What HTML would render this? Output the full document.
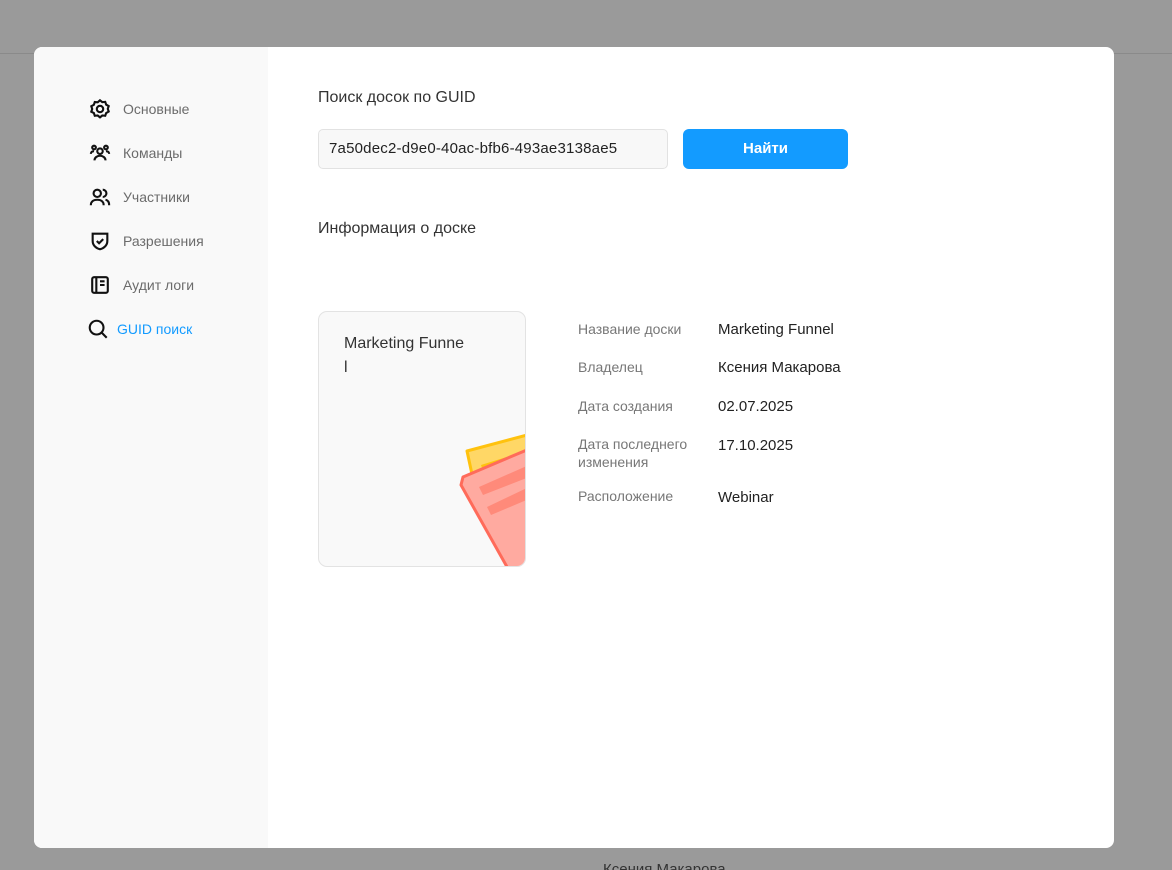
<!DOCTYPE html>
<html><head><meta charset="utf-8"><style>
*{box-sizing:border-box;margin:0;padding:0}
html,body{width:1172px;height:870px;overflow:hidden}
body{background:#9a9a9a;font-family:"Liberation Sans","DejaVu Sans",sans-serif;position:relative}
.line{position:absolute;left:0;right:0;top:53px;height:1px;background:#8a8a8a}
.bg-text{position:absolute;left:603px;top:861px;font-size:15px;color:#333}
.modal{position:absolute;left:34px;top:47px;width:1080px;height:801px;background:#fff;border-radius:8px;overflow:hidden}
.side{position:absolute;left:0;top:0;width:234px;height:100%;background:#f9f9f9}
.item{position:absolute;left:55px;display:flex;align-items:center;font-size:14px;color:#6b6b6b;white-space:nowrap}
.item svg{width:22px;height:22px;margin-right:12px}
.main{position:absolute;left:284px;top:0;width:700px;height:700px}
h3{font-weight:normal;font-size:16px;color:#333;position:absolute;white-space:nowrap}
.input{position:absolute;left:0;top:82px;width:350px;height:40px;border:1px solid #e2e2e2;background:#f8f8f8;border-radius:5px;font-size:15px;color:#222;padding:10px 10px;letter-spacing:0.2px;white-space:nowrap}
.btn{position:absolute;left:365px;top:82px;width:165px;height:40px;background:#139bff;border-radius:6px;color:#fff;font-weight:bold;font-size:15px;text-align:center;line-height:40px}
.card{position:absolute;left:0;top:264px;width:208px;height:256px;border:1px solid #e3e3e3;border-radius:9px;background:#f9f9f9;overflow:hidden}
.card .t{position:absolute;left:25px;top:20px;font-size:16px;color:#333;line-height:24px;width:140px}
.lbl{position:absolute;left:260px;font-size:14px;color:#777;line-height:18px;white-space:nowrap}
.val{position:absolute;left:400px;font-size:15px;color:#222;white-space:nowrap}
</style></head><body>
<div class="line"></div>
<div class="bg-text">Ксения Макарова</div>
<div class="modal">
<div class="side">
<div class="item" style="top:51px"><svg viewBox="0 0 24 24" fill="none" stroke="#111" stroke-width="2.3"><path d="M12 2.5l2.5 2 3.2-.3 1 3 2.8 1.6-1 3 1 3-2.8 1.6-1 3-3.2-.3-2.5 2-2.5-2-3.2.3-1-3L2.5 15l1-3-1-3 2.8-1.6 1-3 3.2.3z"/><circle cx="12" cy="12" r="3.5"/></svg>Основные</div>
<div class="item" style="top:95px"><svg viewBox="0 0 24 24" fill="none" stroke="#111" stroke-width="2.3"><circle cx="12" cy="10" r="3"/><path d="M6 20c0-3 3-5 6-5s6 2 6 5"/><circle cx="5.5" cy="6" r="2"/><circle cx="18.5" cy="6" r="2"/><path d="M2 13c0-2 1.5-3 3.5-3M22 13c0-2-1.5-3-3.5-3"/></svg>Команды</div>
<div class="item" style="top:139px"><svg viewBox="0 0 24 24" fill="none" stroke="#111" stroke-width="2.3"><circle cx="9" cy="8" r="4"/><path d="M2 21c0-4 3-6 7-6s7 2 7 6"/><path d="M15 4a4 4 0 010 8M18 15c2.5.5 4 2.5 4 6"/></svg>Участники</div>
<div class="item" style="top:183px"><svg viewBox="0 0 24 24" fill="none" stroke="#111" stroke-width="2.3"><path d="M4 4h16v8c0 5-4 8-8 9-4-1-8-4-8-9z"/><path d="M8.5 12l2.5 2.5 4.5-4.5"/></svg>Разрешения</div>
<div class="item" style="top:227px"><svg viewBox="0 0 24 24" fill="none" stroke="#111" stroke-width="2.3"><rect x="3.5" y="3.5" width="17" height="17" rx="2"/><path d="M8 4v16M12 8h5M12 12h5"/></svg>Аудит логи</div>
<div class="item" style="top:271px;left:53px;color:#139bff"><svg viewBox="0 0 24 24" fill="none" stroke="#111" stroke-width="2.3" style="margin-right:8px"><circle cx="10.5" cy="10.5" r="7.5"/><path d="M16 16l5.5 5.5"/></svg>GUID поиск</div>
</div>
<div class="main">
<h3 style="top:42px">Поиск досок по GUID</h3>
<div class="input">7a50dec2-d9e0-40ac-bfb6-493ae3138ae5</div>
<div class="btn">Найти</div>
<h3 style="top:173px">Информация о доске</h3>
<div class="card"><div class="t">Marketing Funne<br>l</div>
<svg style="position:absolute;left:140px;top:115px" width="70" height="145" viewBox="0 0 70 145">
<path d="M8 24l60-16v60L20 80z" fill="#ffd766" stroke="#ffc20e" stroke-width="3" stroke-linejoin="round"/>
<path d="M22 38l48-15v20L28 55z" fill="#ffc20e"/>
<path d="M4 50l66-28v125H52L2 58z" fill="#ffaaa0" stroke="#ff6b5a" stroke-width="3" stroke-linejoin="round"/>
<path d="M20 60l50-22v12L24 68zM28 80l42-20v12L32 88z" fill="#ff8a7a"/>
</svg></div>
<div class="lbl" style="top:273px">Название доски</div><div class="val" style="top:274px">Marketing Funnel</div>
<div class="lbl" style="top:311px">Владелец</div><div class="val" style="top:312px">Ксения Макарова</div>
<div class="lbl" style="top:350px">Дата создания</div><div class="val" style="top:351px">02.07.2025</div>
<div class="lbl" style="top:388px">Дата последнего<br>изменения</div><div class="val" style="top:390px">17.10.2025</div>
<div class="lbl" style="top:440px">Расположение</div><div class="val" style="top:442px">Webinar</div>
</div>
</div>
</body></html>
